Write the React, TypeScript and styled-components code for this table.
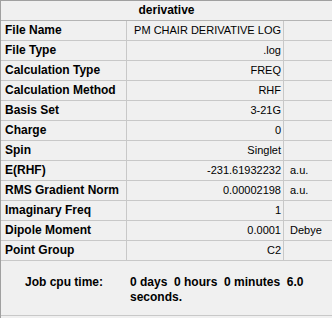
import React from "react";
import styled, { createGlobalStyle } from "styled-components";

const Global = createGlobalStyle`
  html, body { margin: 0; padding: 0; background: #f0f0f0; }
  body { font-family: "Liberation Sans", Arial, sans-serif; }
`;

const Frame = styled.div`
  width: 332px;
  height: 318px;
  box-sizing: border-box;
  background: #f0f0f0;
  border-top: 1px solid #a0a0a0;
  border-left: 1px solid #a0a0a0;
  font-family: "Liberation Sans", Arial, sans-serif;
  font-size: 11px;
  color: #000;
`;

const Header = styled.div`
  height: 19px;
  line-height: 19px;
  border-bottom: 1px solid #b4b4b4;
  text-align: center;
  font-weight: bold;
  font-size: 12px;
`;

const Row = styled.div`
  display: grid;
  grid-template-columns: 126px 157px 1fr;
  height: 19px;
  border-bottom: 1px solid #c8c8c8;
  line-height: 19px;
`;

const Label = styled.div`
  font-weight: bold;
  font-size: 12px;
  padding-left: 4px;
  border-right: 1px solid #c8c8c8;
  white-space: nowrap;
  overflow: hidden;
`;

const Value = styled.div`
  text-align: right;
  padding-right: 2px;
  border-right: 1px solid #c8c8c8;
  white-space: nowrap;
  overflow: hidden;
`;

const Unit = styled.div`
  padding-left: 6px;
  white-space: nowrap;
`;

const Footer = styled.div`
  height: 55px;
  border-bottom: 1px solid #c8c8c8;
  display: grid;
  grid-template-columns: 129px 1fr;
  padding-top: 14px;
  box-sizing: border-box;
  font-weight: bold;
  font-size: 12px;
  line-height: 15px;
`;

const FooterLabel = styled.div`
  padding-left: 24px;
`;

const FooterValue = styled.div`
  white-space: pre;
`;

const rows: [string, string, string][] = [
  ["File Name", "PM CHAIR DERIVATIVE LOG", ""],
  ["File Type", ".log", ""],
  ["Calculation Type", "FREQ", ""],
  ["Calculation Method", "RHF", ""],
  ["Basis Set", "3-21G", ""],
  ["Charge", "0", ""],
  ["Spin", "Singlet", ""],
  ["E(RHF)", "-231.61932232", "a.u."],
  ["RMS Gradient Norm", "0.00002198", "a.u."],
  ["Imaginary Freq", "1", ""],
  ["Dipole Moment", "0.0001", "Debye"],
  ["Point Group", "C2", ""],
];

export default function App() {
  return (
    <>
      <Global />
      <Frame>
        <Header>derivative</Header>
        {rows.map(([l, v, u]) => (
          <Row key={l}>
            <Label>{l}</Label>
            <Value>{v}</Value>
            <Unit>{u}</Unit>
          </Row>
        ))}
        <Footer>
          <FooterLabel>Job cpu time:</FooterLabel>
          <FooterValue>{"0 days  0 hours  0 minutes  6.0\nseconds."}</FooterValue>
        </Footer>
      </Frame>
    </>
  );
}
